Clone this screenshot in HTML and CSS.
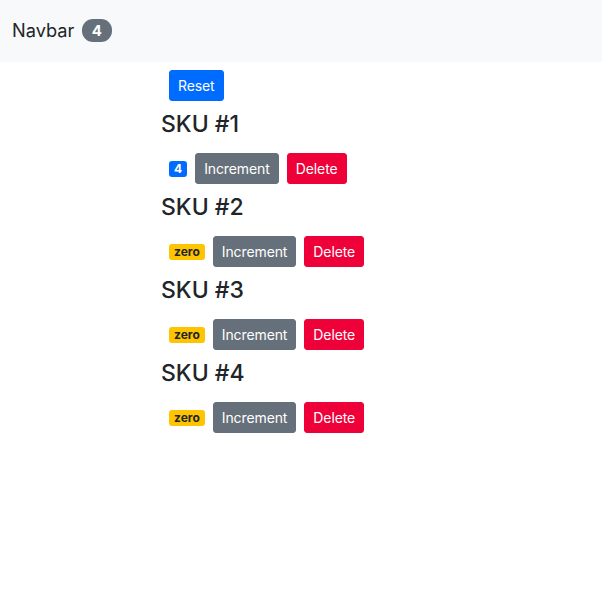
FILE: index.html
```html
<!DOCTYPE html>
<html>
<head>
<meta charset="utf-8">
<link rel="stylesheet" href="styles.css">
</head>
<body>
<nav class="navbar">
  <span class="brand">Navbar <span class="pill">4</span></span>
</nav>
<main class="main">
  <button class="btn btn-primary m-2">Reset</button>
  <div class="counter">
    <h4 class="title">SKU #1</h4>
    <div class="row"><span class="badge badge-primary m-2">4</span><button class="btn btn-secondary">Increment</button><button class="btn btn-danger m-2">Delete</button></div>
  </div>
  <div class="counter">
    <h4 class="title">SKU #2</h4>
    <div class="row"><span class="badge badge-warning m-2">zero</span><button class="btn btn-secondary">Increment</button><button class="btn btn-danger m-2">Delete</button></div>
  </div>
  <div class="counter">
    <h4 class="title">SKU #3</h4>
    <div class="row"><span class="badge badge-warning m-2">zero</span><button class="btn btn-secondary">Increment</button><button class="btn btn-danger m-2">Delete</button></div>
  </div>
  <div class="counter">
    <h4 class="title">SKU #4</h4>
    <div class="row"><span class="badge badge-warning m-2">zero</span><button class="btn btn-secondary">Increment</button><button class="btn btn-danger m-2">Delete</button></div>
  </div>
</main>
</body>
</html>
```
FILE: styles.css
```css
html, body {
  margin: 0;
  padding: 0;
  background: #fff;
}
body {
  font-family: Inter, "Noto Sans", "Liberation Sans", sans-serif;
  font-size: 16px;
  line-height: 1.5;
  color: #212529;
}
.navbar {
  background: #f8f9fa;
  height: 62px;
  display: flex;
  align-items: center;
  padding-left: 12px;
  box-sizing: border-box;
}
.brand {
  font-size: 18.2px;
  color: #212529;
  display: flex;
  align-items: center;
  gap: 8px;
}
.pill {
  display: inline-block;
  background: #66707a;
  color: #fff;
  font-weight: 700;
  font-size: 15px;
  line-height: 1;
  padding: 4px 9.5px;
  border-radius: 11px;
}
.main {
  padding-left: 161px;
}
.m-2 {
  margin: 8px;
}
.btn {
  display: inline-block;
  font-family: inherit;
  font-size: 14px;
  letter-spacing: -0.1px;
  line-height: 21px;
  height: 31px;
  padding: 4px 8px;
  border: 1px solid transparent;
  border-radius: 3px;
  color: #fff;
  vertical-align: middle;
  cursor: pointer;
}
.btn-primary { background: #006cff; border-color: #006cff; }
.btn-secondary { background: #66707a; border-color: #66707a; }
.btn-danger { background: #ee0038; border-color: #ee0038; }
.title {
  font-size: 23px;
  font-weight: 500;
  line-height: 28px;
  padding-top: 1px;
  margin: 0 0 7px 0;
}
.row {
  height: 47px;
  display: flex;
  align-items: center;
}
.badge {
  display: inline-block;
  font-size: 12px;
  font-weight: 700;
  line-height: 1;
  padding: 2px 5px;
  border-radius: 3px;
}
.badge-primary { background: #006cff; color: #fff; }
.badge-warning { background: #ffc400; color: #212529; }
.badge.m-2 { margin: 0 8px; }
```
